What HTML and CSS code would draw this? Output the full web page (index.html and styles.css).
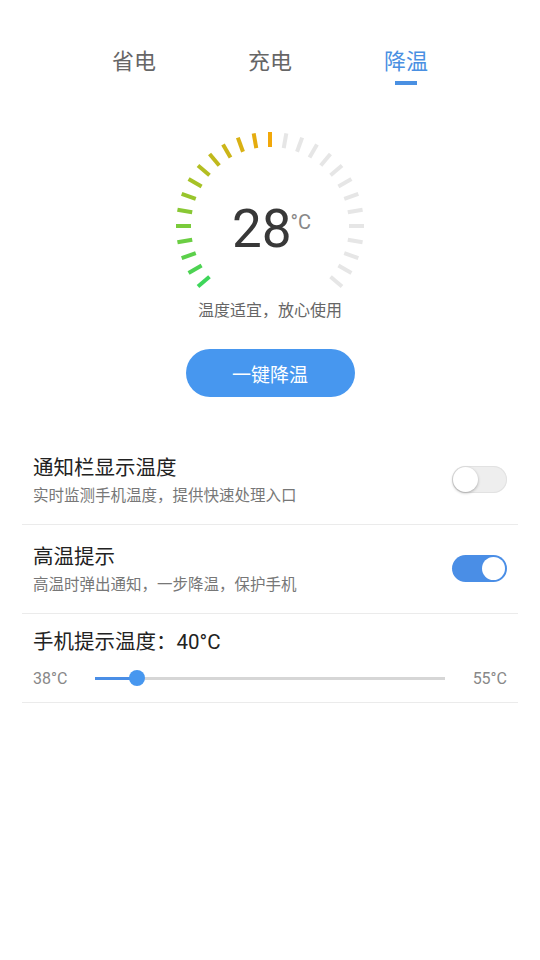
FILE: index.html
```html
<!DOCTYPE html>
<html lang="zh-CN">
<head>
  <meta charset="UTF-8" />
  <title>降温</title>
  <link rel="stylesheet" href="styles.css">
</head>
<body>

  <!-- Tabs -->
  <div class="tabs">
    <div class="tab">省电</div>
    <div class="tab">充电</div>
    <div class="tab active">降温</div>
  </div>

  <!-- Gauge -->
  <div class="gauge">
    <svg id="dial" width="200" height="170" viewBox="0 0 200 170"></svg>
    <div class="temp">
      <span class="temp-num">28</span><span class="temp-unit">°C</span>
    </div>
  </div>
  <p class="hint">温度适宜，放心使用</p>
  <button class="cool-btn">一键降温</button>

  <!-- Settings -->
  <div class="settings">
    <div class="row">
      <div class="row-text">
        <div class="row-title">通知栏显示温度</div>
        <div class="row-sub">实时监测手机温度，提供快速处理入口</div>
      </div>
      <div class="switch"><span class="knob"></span></div>
    </div>
    <div class="row">
      <div class="row-text">
        <div class="row-title">高温提示</div>
        <div class="row-sub">高温时弹出通知，一步降温，保护手机</div>
      </div>
      <div class="switch on"><span class="knob"></span></div>
    </div>
    <div class="row slider-row">
      <div class="row-title">手机提示温度：40°C</div>
      <div class="slider">
        <span class="slider-label">38°C</span>
        <div class="track">
          <div class="fill" style="width: 12%"></div>
          <span class="thumb" style="left: 12%"></span>
        </div>
        <span class="slider-label">55°C</span>
      </div>
    </div>
  </div>

  <script>
    // Dial ticks: -130deg to 130deg, every 10deg; lit up to the current value
    const dial = document.getElementById('dial');
    const stops = [[62, 214, 90], [160, 196, 40], [242, 168, 10]];
    const lit = 14;

    function mix(t) {
      const seg = t < 0.5 ? 0 : 1;
      const k = t < 0.5 ? t * 2 : (t - 0.5) * 2;
      const a = stops[seg], b = stops[seg + 1];
      return `rgb(${a.map((v, i) => Math.round(v + (b[i] - v) * k)).join(',')})`;
    }

    for (let i = 0; i < 27; i++) {
      const angle = -130 + i * 10;
      const line = document.createElementNS('http://www.w3.org/2000/svg', 'line');
      line.setAttribute('x1', 100);
      line.setAttribute('y1', 6);
      line.setAttribute('x2', 100);
      line.setAttribute('y2', 21);
      line.setAttribute('transform', `rotate(${angle} 100 100)`);
      line.setAttribute('stroke', i < lit ? mix(i / (lit - 1)) : '#e6e6e6');
      line.setAttribute('stroke-width', 4);
      dial.appendChild(line);
    }
  </script>
</body>
</html>
```

FILE: styles.css
```css
body {
  margin: 0;
  font-family: Roboto, "Noto Sans CJK SC", sans-serif;
  background: #fff;
  color: #222;
  display: flex;
  flex-direction: column;
  align-items: center;
  width: 540px;
  height: 960px;
}

.tabs {
  display: flex;
  justify-content: center;
  padding-top: 49px;
}

.tab {
  width: 136px;
  text-align: center;
  font-size: 22px;
  line-height: 26px;
  color: #666;
  display: flex;
  flex-direction: column;
  align-items: center;
}

.tab.active {
  color: #4a90e2;
}

.tab::after {
  content: "";
  width: 22px;
  height: 4px;
  margin-top: 6px;
}

.tab.active::after {
  background: #4a90e2;
}

.gauge {
  position: relative;
  width: 200px;
  height: 170px;
  margin-top: 41px;
  margin-left: -1px;
}

.gauge svg {
  display: block;
}

.temp {
  position: absolute;
  top: 0;
  left: 0;
  width: 200px;
  height: 200px;
  padding-top: 6px;
  box-sizing: border-box;
  display: flex;
  justify-content: center;
  align-items: center;
  margin-left: 2px;
}

.temp-num {
  font-size: 53px;
  line-height: 1;
  color: #383838;
}

.temp-unit {
  font-size: 20px;
  line-height: 1;
  color: #888;
  align-self: flex-start;
  margin-top: 80px;
  margin-left: -1px;
}

.hint {
  margin: 5px 0 0;
  font-size: 16px;
  line-height: 20px;
  color: #666;
}

.cool-btn {
  margin-top: 28px;
  width: 169px;
  height: 48px;
  border: none;
  border-radius: 24px;
  background: #4797ef;
  color: #fff;
  font-family: inherit;
  font-size: 19px;
  cursor: pointer;
}

.settings {
  align-self: stretch;
  margin: 39px 22px 0;
}

.row {
  display: flex;
  align-items: center;
  justify-content: space-between;
  padding: 20px 11px 18px;
  border-bottom: 1px solid #ebebeb;
}

.row-title {
  font-size: 20.5px;
  line-height: 24px;
  color: #222;
}

.row-sub {
  margin-top: 6px;
  font-size: 15.5px;
  line-height: 20px;
  color: #777;
}

.switch {
  position: relative;
  width: 55px;
  height: 27px;
  margin-top: -3px;
  border-radius: 14px;
  background: #eeeeee;
  box-shadow: inset 0 0 0 1px #e2e2e2;
}

.switch .knob {
  position: absolute;
  top: 1px;
  left: 1px;
  width: 25px;
  height: 25px;
  border-radius: 50%;
  background: #fff;
  box-shadow: 0 1px 3px rgba(0, 0, 0, 0.3);
}

.switch.on {
  background: #4a8ee6;
  box-shadow: none;
}

.switch.on .knob {
  left: auto;
  right: 2px;
  top: 2px;
  width: 23px;
  height: 23px;
  box-shadow: none;
}

.slider-row {
  display: block;
  padding: 16px 11px 14px;
}

.slider {
  display: flex;
  align-items: center;
  height: 20px;
  margin-top: 14px;
}

.slider-label {
  font-size: 16px;
  color: #888;
}

.track {
  position: relative;
  flex: 1;
  height: 3px;
  margin: 0 28px;
  background: #d6d6d6;
}

.fill {
  height: 3px;
  background: #4a8ee6;
}

.thumb {
  position: absolute;
  top: -6.5px;
  width: 16px;
  height: 16px;
  margin-left: -8px;
  border-radius: 50%;
  background: #4797ef;
}
```
